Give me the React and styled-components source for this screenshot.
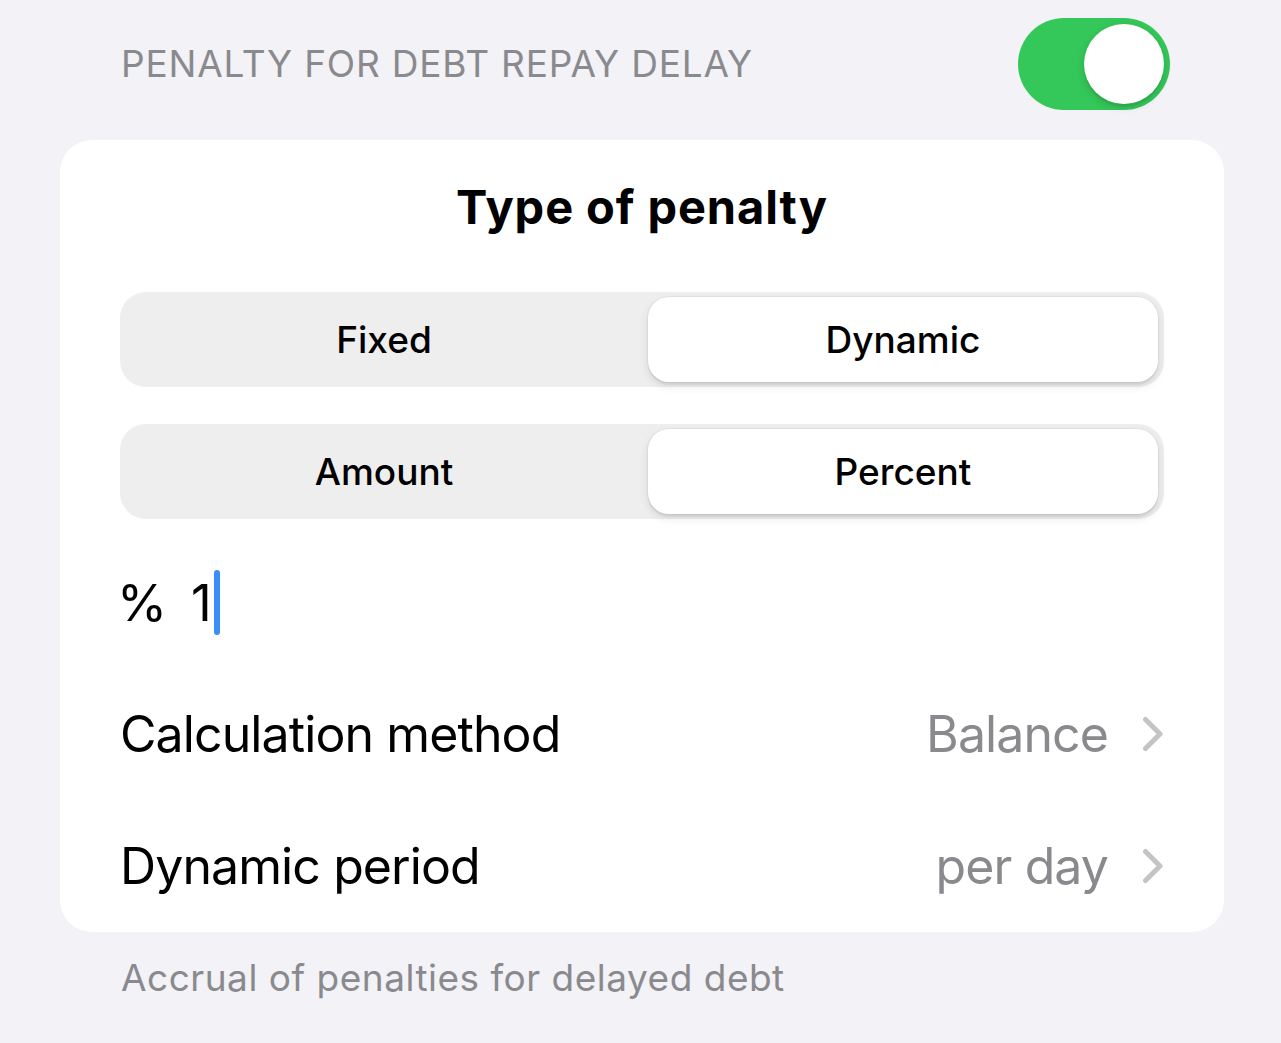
import React from "react";
import styled, { createGlobalStyle } from "styled-components";

const Global = createGlobalStyle`
  html, body {
    margin: 0;
    padding: 0;
    background: #f2f2f7;
  }
  body {
    font-family: Inter, "Noto Sans", "Liberation Sans", sans-serif;
    -webkit-font-smoothing: antialiased;
  }
`;

const Page = styled.div`
  width: 1281px;
  min-height: 1043px;
  box-sizing: border-box;
  padding: 17px 57px 0 60px;
  background: #f2f2f7;
`;

const HeaderRow = styled.div`
  display: flex;
  align-items: center;
  justify-content: space-between;
  height: 93px;
  padding: 0 54px 0 61px;
`;

const SectionLabel = styled.div`
  font-size: 37px;
  color: #8a8a8e;
  text-transform: uppercase;
  letter-spacing: 0.8px;
  line-height: 46px;
`;

const Switch = styled.div`
  width: 152px;
  height: 92px;
  border-radius: 46px;
  background: ${(p) => (p.$on ? "#34c759" : "#e9e9eb")};
  display: flex;
  align-items: center;
  justify-content: ${(p) => (p.$on ? "flex-end" : "flex-start")};
  padding: 0 6px;
  box-sizing: border-box;
`;

const Knob = styled.div`
  width: 80px;
  height: 80px;
  border-radius: 50%;
  background: #ffffff;
  box-shadow: 0 3px 8px rgba(0, 0, 0, 0.15), 0 3px 1px rgba(0, 0, 0, 0.06);
`;

const Card = styled.div`
  margin-top: 30px;
  background: #ffffff;
  border-radius: 32px;
  padding: 36px 60px 0;
  display: flex;
  flex-direction: column;
`;

const Title = styled.div`
  text-align: center;
  font-size: 47px;
  font-weight: 700;
  line-height: 60px;
  color: #000;
  letter-spacing: 0.9px;
  margin-top: 1px;
`;

const Segmented = styled.div`
  margin-top: ${(p) => p.$mt}px;
  height: 95px;
  box-sizing: border-box;
  border-radius: 26px;
  background: #eeeeef;
  padding: 5px 6px 5px 0;
  display: grid;
  grid-template-columns: 1fr 510px;
`;

const Segment = styled.div`
  display: flex;
  align-items: center;
  justify-content: center;
  border-radius: 21px;
  font-size: 37px;
  font-weight: 500;
  color: #000;
  background: ${(p) => (p.$active ? "#ffffff" : "transparent")};
  box-shadow: ${(p) =>
    p.$active
      ? "0 0 0 1px rgba(0,0,0,0.04), 0 4px 10px rgba(0,0,0,0.10), 0 3px 1px rgba(0,0,0,0.05)"
      : "none"};
`;

const InputRow = styled.div`
  margin-top: 17px;
  height: 132px;
  display: flex;
  align-items: center;
  font-size: 51px;
  color: #000;
`;

const Unit = styled.span`
  margin-left: -3px;
  margin-right: 24px;
`;

const Caret = styled.span`
  display: inline-block;
  width: 6px;
  height: 65px;
  border-radius: 3px;
  background: #3a8ff7;
  margin-left: 2px;
`;

const Row = styled.div`
  height: 132px;
  display: flex;
  align-items: center;
  justify-content: space-between;
  font-size: 50px;
  letter-spacing: -0.9px;
  color: #000;
`;

const RowLabel = styled.span``;

const RowValue = styled.span`
  display: flex;
  align-items: center;
  gap: 34px;
  color: #8a8a8e;
`;

const Footer = styled.div`
  margin-top: 23px;
  padding-left: 61px;
  font-size: 37px;
  line-height: 46px;
  letter-spacing: 0.5px;
  color: #8a8a8e;
`;

const Chevron = () => (
  <svg width="22" height="36" viewBox="0 0 22 36" fill="none">
    <polyline
      points="3.5,3.5 18,18 3.5,32.5"
      stroke="#c4c4c7"
      strokeWidth="5"
      strokeLinecap="round"
      strokeLinejoin="round"
    />
  </svg>
);

export default function App() {
  return (
    <>
      <Global />
      <Page>
        <HeaderRow>
          <SectionLabel>Penalty for debt repay delay</SectionLabel>
          <Switch $on>
            <Knob />
          </Switch>
        </HeaderRow>
        <Card>
          <Title>Type of penalty</Title>
          <Segmented $mt={55}>
            <Segment>Fixed</Segment>
            <Segment $active>Dynamic</Segment>
          </Segmented>
          <Segmented $mt={37}>
            <Segment>Amount</Segment>
            <Segment $active>Percent</Segment>
          </Segmented>
          <InputRow>
            <Unit>%</Unit>
            <span>1</span>
            <Caret />
          </InputRow>
          <Row>
            <RowLabel>Calculation method</RowLabel>
            <RowValue>
              Balance
              <Chevron />
            </RowValue>
          </Row>
          <Row>
            <RowLabel>Dynamic period</RowLabel>
            <RowValue>
              per day
              <Chevron />
            </RowValue>
          </Row>
        </Card>
        <Footer>Accrual of penalties for delayed debt</Footer>
      </Page>
    </>
  );
}
